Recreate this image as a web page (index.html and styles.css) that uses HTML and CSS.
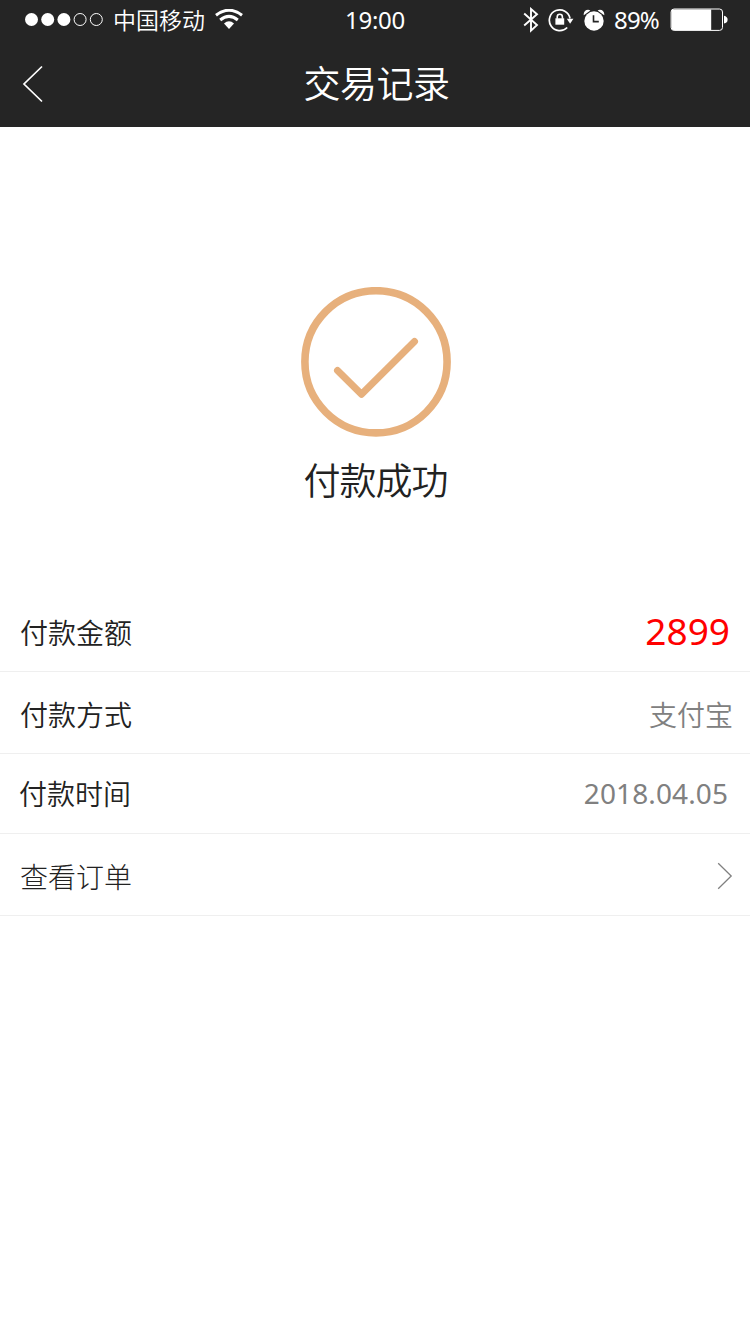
FILE: index.html
```html
<!DOCTYPE html>
<html lang="zh-CN">
<head>
    <meta charset="UTF-8">
    <meta name="viewport" content="width=device-width, initial-scale=1.0">
    <title>交易记录</title>
    <link rel="stylesheet" href="styles.css">
</head>
<body>
    <header>
        <div class="status-bar">
            <div class="status-left">
                <svg class="signal" width="80" height="16" viewBox="0 0 80 16">
                    <g fill="#fff">
                        <circle cx="7.5" cy="7.5" r="6.5"/>
                        <circle cx="23.7" cy="7.5" r="6.5"/>
                        <circle cx="39.9" cy="7.5" r="6.5"/>
                    </g>
                    <g fill="none" stroke="#fff">
                        <circle cx="56.1" cy="7.5" r="6"/>
                        <circle cx="72.3" cy="7.5" r="6"/>
                    </g>
                </svg>
                <span class="carrier">中国移动</span>
                <svg class="wifi" width="28" height="22" viewBox="0 0 28 22">
                    <g fill="none" stroke="#fff" stroke-width="3">
                        <path d="M1 6.2Q14 -3.8 27 6.2"/>
                        <path d="M5.2 11Q14 3.8 22.8 11"/>
                    </g>
                    <path d="M9 14.6Q14 10 19 14.6L14 19.9Z" fill="#fff"/>
                </svg>
            </div>
            <span class="time">19:00</span>
            <div class="status-right">
                <svg class="bluetooth" width="16" height="26" viewBox="0 0 16 26">
                    <path d="M1.2 6.5L14 18L8 23.6V2L14 7.2L1.2 18.5" fill="none" stroke="#fff" stroke-width="1.9"/>
                </svg>
                <svg class="rotation-lock" width="26" height="24" viewBox="0 0 26 24">
                    <path d="M19.2 19.5A10.4 10.4 0 1 1 22 10.5" fill="none" stroke="#fff" stroke-width="1.7"/>
                    <path d="M18.8 10.8H25.4L22.1 15.8Z" fill="#fff"/>
                    <rect x="7.4" y="10.3" width="8.8" height="6.4" fill="#fff"/>
                    <path d="M9.2 10.7V8.9A2.6 2.6 0 0 1 14.4 8.9V10.7" fill="none" stroke="#fff" stroke-width="1.6"/>
                </svg>
                <svg class="alarm" width="22" height="22" viewBox="0 0 22 22">
                    <circle cx="11" cy="12" r="9.7" fill="#fff"/>
                    <path d="M0.8 6.2C0 2.6 3.6 -0.4 7.4 1.4ZM21.2 6.2C22 2.6 18.4 -0.4 14.6 1.4Z" fill="#fff"/>
                    <path d="M10.5 6.2V12.6H15.8" fill="none" stroke="#252525" stroke-width="1.6"/>
                </svg>
                <span class="percent">89%</span>
                <svg class="battery" width="58" height="24" viewBox="0 0 58 24">
                    <rect x="1.1" y="1" width="51.4" height="21.4" rx="3" fill="none" stroke="#fff" stroke-width="1"/>
                    <path d="M3.5 1.5H41.2V21.9H3.5Q1.5 21.9 1.5 19.9V3.5Q1.5 1.5 3.5 1.5Z" fill="#fff"/>
                    <path d="M54 7.8Q57.6 8.6 57.6 11.7T54 15.6Z" fill="#fff"/>
                </svg>
            </div>
        </div>
        <nav>
            <a class="back" href="#" aria-label="返回">
                <svg width="22" height="38" viewBox="0 0 22 38">
                    <path d="M20 1.5L2 19L20 36.5" fill="none" stroke="#fff" stroke-width="1.7"/>
                </svg>
            </a>
            <h1>交易记录</h1>
        </nav>
    </header>

    <div class="result">
        <svg class="check" width="150" height="150" viewBox="0 0 150 150">
            <g fill="none" stroke="#e7b07c">
                <circle cx="75" cy="74.8" r="71.1" stroke-width="7.6"/>
                <path d="M36.5 83.5L60.5 107.3L113.5 54.5" stroke-width="7" stroke-linecap="round" stroke-linejoin="round"/>
            </g>
        </svg>
        <p>付款成功</p>
    </div>

    <ul class="details">
        <li>
            <span class="label">付款金额</span>
            <span class="amount">2899</span>
        </li>
        <li class="method">
            <span class="label">付款方式</span>
            <span class="value">支付宝</span>
        </li>
        <li class="date">
            <span class="label">付款时间</span>
            <span class="value">2018.04.05</span>
        </li>
        <li class="order">
            <span class="label">查看订单</span>
            <svg width="16" height="28" viewBox="0 0 16 28">
                <path d="M1.2 1.2L14.2 14L1.2 26.8" fill="none" stroke="#808080" stroke-width="1.3"/>
            </svg>
        </li>
    </ul>
</body>
</html>
```

FILE: styles.css
```css
body {
    font-family: "Noto Sans", "Noto Sans CJK SC", sans-serif;
    background-color: #fff;
    color: #222;
    margin: 0;
    padding: 0;
}
svg {
    display: block;
    flex-shrink: 0;
}
header {
    height: 127px;
    background-color: #252525;
    color: #fff;
}
.status-bar {
    display: grid;
    grid-template-columns: 1fr auto 1fr;
    align-items: center;
    height: 40px;
    padding: 0 22px 0 24px;
    font-size: 24px;
    line-height: 40px;
}
.status-left, .status-right {
    display: flex;
    align-items: center;
}
.status-right {
    justify-content: flex-end;
}
.carrier {
    height: 40px;
    margin-left: 9px;
    font-family: "Noto Sans CJK SC", sans-serif;
    font-size: 23px;
    font-weight: 350;
    line-height: 39px;
}
.wifi {
    margin-left: 10px;
}
.time {
    padding-right: 2px;
    letter-spacing: -0.3px;
}
.rotation-lock {
    margin-left: 9px;
}
.alarm {
    margin-left: 9px;
}
.percent {
    margin-left: 9px;
    letter-spacing: -0.8px;
}
.battery {
    margin-left: 11px;
}
nav {
    display: grid;
    grid-template-columns: 60px 1fr 57px;
    align-items: center;
    height: 88px;
}
.back {
    padding-left: 22px;
}
h1 {
    margin: 0;
    font-family: "Noto Sans CJK SC", sans-serif;
    font-size: 37px;
    font-weight: 350;
    letter-spacing: -0.5px;
    line-height: 84px;
    height: 88px;
    text-align: center;
}
.result {
    display: flex;
    flex-direction: column;
    align-items: center;
    box-sizing: border-box;
    height: 465px;
    padding: 160px 0 0 1px;
}
.check {
    margin-left: 1px;
}
.result p {
    margin: 15px 0 0;
    font-family: "Noto Sans CJK SC", sans-serif;
    font-size: 37px;
    font-weight: 350;
    letter-spacing: -1px;
    line-height: 54px;
}
.details {
    list-style: none;
    margin: 0;
    padding: 0;
}
.details li {
    display: flex;
    justify-content: space-between;
    align-items: center;
    box-sizing: border-box;
    height: 82px;
    padding: 0 17px 0 20px;
    border-bottom: 1px solid #efefef;
    font-size: 28px;
}
.details li:first-child {
    height: 80px;
    padding-right: 20px;
}
.label {
    font-family: "Noto Sans CJK SC", sans-serif;
    font-weight: 350;
}
.amount {
    padding-bottom: 3px;
    color: #f00;
    font-size: 37px;
}
.value {
    color: #808080;
}
.method .value {
    font-weight: 350;
}
.details .method {
    padding-top: 2px;
}
.details .date {
    height: 80px;
    padding: 0 22px 2px 19px;
}
.date .value {
    letter-spacing: 0.1px;
}
.details .order {
    padding-top: 2px;
}
.order .label {
    font-weight: 300;
}
```
